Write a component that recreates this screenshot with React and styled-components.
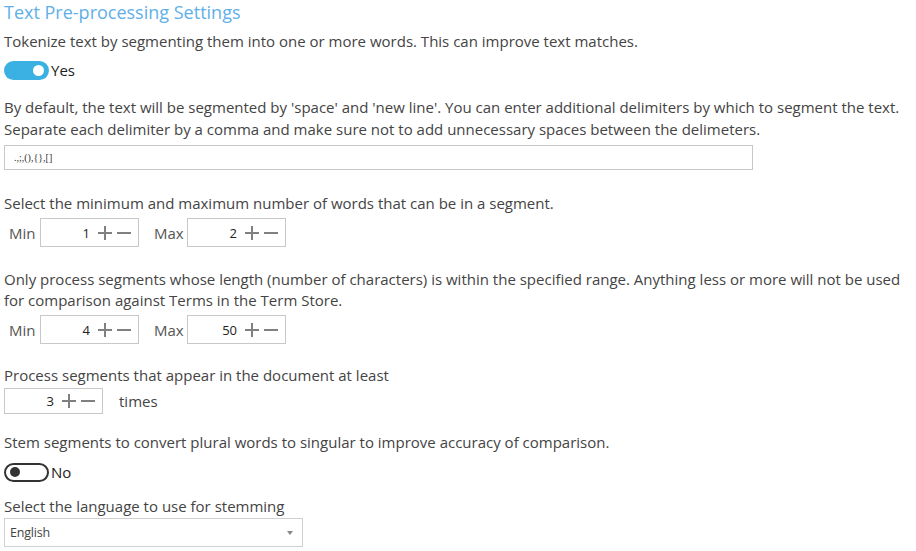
import React from "react";
import styled, { createGlobalStyle } from "styled-components";

const Global = createGlobalStyle`
  html, body { margin: 0; padding: 0; background: #fff; }
  body { font-family: "Open Sans", "Noto Sans", sans-serif; color: #444; }
  * { box-sizing: border-box; }
`;

const Page = styled.div`
  padding: 0 4px 0 4px;
  width: 916px;
  font-size: 15px;
`;

const Title = styled.h1`
  margin: 0;
  font-size: 18px;
  font-weight: 400;
  color: #5fb0e8;
  line-height: 24px;
`;

const Text = styled.p`
  margin: ${(p) => p.$mt || 0}px 0 0 0;
  line-height: ${(p) => p.$lh || 22}px;
  color: #444;
`;

const ToggleRow = styled.div`
  display: flex;
  align-items: center;
  margin-top: ${(p) => p.$mt || 6}px;
  height: 20px;
`;

const Track = styled.div`
  width: 45px;
  height: 19px;
  border-radius: 10px;
  display: flex;
  align-items: center;
  justify-content: ${(p) => (p.$on ? "flex-end" : "flex-start")};
  padding: 0 4px;
  background: ${(p) => (p.$on ? "#3bb0e3" : "#fff")};
  border: ${(p) => (p.$on ? "none" : "2px solid #333")};
`;

const Knob = styled.div`
  width: ${(p) => (p.$on ? 11 : 10)}px;
  height: ${(p) => (p.$on ? 11 : 10)}px;
  border-radius: 50%;
  background: ${(p) => (p.$on ? "#fff" : "#333")};
  margin: 0 ${(p) => (p.$on ? 1 : 0)}px;
`;

const ToggleLabel = styled.span`
  color: #222;
  margin-left: 2px;
`;

const TextInput = styled.div`
  margin-top: 5px;
  width: 749px;
  height: 25px;
  border: 1px solid #c8c8c8;
  display: flex;
  align-items: center;
  padding: 0 9px;
  font-family: "Liberation Serif", serif;
  font-size: 10px;
  color: #333;
`;

const NumRow = styled.div`
  display: flex;
  align-items: center;
  margin-top: ${(p) => p.$mt || 4}px;
  padding-left: ${(p) => p.$pl || 0}px;
`;

const Label = styled.span`
  color: #555;
  width: ${(p) => p.$w}px;
`;

const NumBox = styled.div`
  width: 99px;
  height: ${(p) => p.$h || 29}px;
  border: 1px solid #c8c8c8;
  display: flex;
  align-items: center;
  justify-content: flex-end;
  padding-right: 6px;
  font-size: 13px;
  color: #222;
  margin-right: ${(p) => p.$mr || 0}px;
`;

const Value = styled.span`
  margin-right: 4px;
`;

const Icon = styled.svg`
  display: block;
  margin-left: 3px;
`;

const Plus = () => (
  <Icon width="16" height="16" viewBox="0 0 16 16">
    <path d="M8 1v14M1 8h14" stroke="#808080" strokeWidth="2" />
  </Icon>
);
const Minus = () => (
  <Icon width="16" height="16" viewBox="0 0 16 16">
    <path d="M1 8h14" stroke="#808080" strokeWidth="2" />
  </Icon>
);

const Spinner = ({ value, mr, h }) => (
  <NumBox $mr={mr} $h={h}>
    <Value>{value}</Value>
    <Plus />
    <Minus />
  </NumBox>
);

const Times = styled.span`
  margin-left: 16px;
  color: #444;
`;

const Select = styled.div`
  margin-top: 1px;
  width: 299px;
  height: 29px;
  border: 1px solid #d0d0d0;
  display: flex;
  align-items: center;
  justify-content: space-between;
  padding: 0 9px 0 5px;
  font-size: 12.5px;
  letter-spacing: -0.2px;
  color: #444;
`;

const Caret = styled.span`
  width: 0;
  height: 0;
  border-left: 3.5px solid transparent;
  border-right: 3.5px solid transparent;
  border-top: 4px solid #888;
`;

export default function App() {
  return (
    <>
      <Global />
      <Page>
        <Title>Text Pre-processing Settings</Title>
        <Text $mt={6}>
          Tokenize text by segmenting them into one or more words. This can improve text matches.
        </Text>
        <ToggleRow $mt={8}>
          <Track $on>
            <Knob $on />
          </Track>
          <ToggleLabel>Yes</ToggleLabel>
        </ToggleRow>
        <Text $mt={16}>
          By default, the text will be segmented by 'space' and 'new line'. You can enter additional
          delimiters by which to segment the text.
          <br />
          Separate each delimiter by a comma and make sure not to add unnecessary spaces between the
          delimeters.
        </Text>
        <TextInput>.,;,(),{"{}"},[]</TextInput>
        <Text $mt={22}>Select the minimum and maximum number of words that can be in a segment.</Text>
        <NumRow $pl={5}>
          <Label $w={31}>Min</Label>
          <Spinner value="1" mr={15} />
          <Label $w={33}>Max</Label>
          <Spinner value="2" />
        </NumRow>
        <Text $mt={22} $lh={21}>
          Only process segments whose length (number of characters) is within the specified range.
          Anything less or more will not be used for comparison against Terms in the Term Store.
        </Text>
        <NumRow $pl={5} $mt={4}>
          <Label $w={31}>Min</Label>
          <Spinner value="4" mr={15} />
          <Label $w={33}>Max</Label>
          <Spinner value="50" />
        </NumRow>
        <Text $mt={20}>Process segments that appear in the document at least</Text>
        <NumRow $mt={2}>
          <Spinner value="3" h={26} />
          <Times>times</Times>
        </NumRow>
        <Text $mt={17}>
          Stem segments to convert plural words to singular to improve accuracy of comparison.
        </Text>
        <ToggleRow $mt={9}>
          <Track>
            <Knob />
          </Track>
          <ToggleLabel>No</ToggleLabel>
        </ToggleRow>
        <Text $mt={13}>Select the language to use for stemming</Text>
        <Select>
          <span>English</span>
          <Caret />
        </Select>
      </Page>
    </>
  );
}
